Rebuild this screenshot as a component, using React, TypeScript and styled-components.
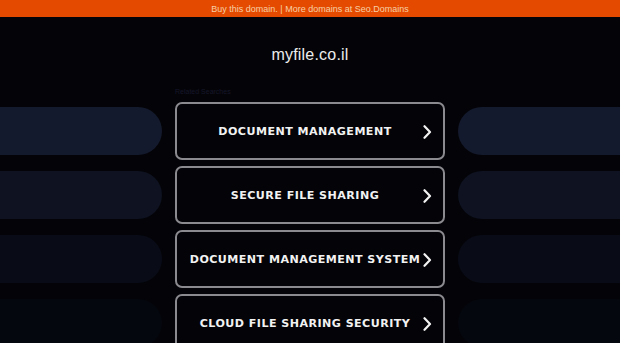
import React from "react";
import styled, { createGlobalStyle } from "styled-components";

const GlobalStyle = createGlobalStyle`
  html, body {
    margin: 0;
    padding: 0;
    background: #040408;
    overflow: hidden;
  }
`;

const Page = styled.div`
  width: 100%;
  min-height: 100vh;
  background: #040408;
  font-family: "Liberation Sans", Arial, sans-serif;
`;

const TopBar = styled.div`
  height: 17px;
  background: #e54b00;
  color: #f6cfa6;
  font-size: 9px;
  display: flex;
  align-items: center;
  justify-content: center;
`;

const Title = styled.h1`
  margin: 0;
  padding-top: 29px;
  height: 20px;
  text-align: center;
  font-size: 16px;
  font-weight: 400;
  color: #ececec;
  letter-spacing: 0.2px;
`;

const Related = styled.div`
  width: 270px;
  margin: 22px auto 0;
  font-size: 7px;
  color: #16162a;
  height: 14px;
`;

const List = styled.div`
  display: flex;
  flex-direction: column;
  gap: 6px;
`;

const Row = styled.div`
  display: flex;
  align-items: center;
  gap: 13px;
`;

const Pill = styled.div<{ $shade: string; $side: "left" | "right" }>`
  flex: 1;
  height: 48px;
  background: ${(p) => p.$shade};
  border-radius: ${(p) => (p.$side === "left" ? "0 24px 24px 0" : "24px 0 0 24px")};
`;

const LinkButton = styled.a`
  box-sizing: border-box;
  width: 270px;
  height: 58px;
  flex: none;
  border: 2px solid #8a8a8f;
  border-radius: 7px;
  padding: 1px 10px 0 12px;
  display: flex;
  align-items: center;
  color: #f2f2f2;
  text-decoration: none;
  font-family: "DejaVu Sans", sans-serif;
  font-weight: 700;
  font-size: 11.1px;
  letter-spacing: 0.45px;
`;

const Label = styled.span`
  flex: 1;
  text-align: center;
  white-space: nowrap;
`;

const Chevron = () => (
  <svg width="12" height="14" viewBox="0 0 12 14" fill="none">
    <path d="M3.5 1.2 L9 7 L3.5 12.8" stroke="#f2f2f2" strokeWidth="2.2" strokeLinecap="round" strokeLinejoin="round" />
  </svg>
);

const items = [
  { label: "DOCUMENT MANAGEMENT", shade: "#141a2d" },
  { label: "SECURE FILE SHARING", shade: "#0e1221" },
  { label: "DOCUMENT MANAGEMENT SYSTEM", shade: "#090c17" },
  { label: "CLOUD FILE SHARING SECURITY", shade: "#05070f" },
];

export default function App() {
  return (
    <Page>
      <GlobalStyle />
      <TopBar>Buy this domain. | More domains at Seo.Domains</TopBar>
      <Title>myfile.co.il</Title>
      <Related>Related Searches</Related>
      <List>
        {items.map((it) => (
          <Row key={it.label}>
            <Pill $shade={it.shade} $side="left" />
            <LinkButton href="#">
              <Label>{it.label}</Label>
              <Chevron />
            </LinkButton>
            <Pill $shade={it.shade} $side="right" />
          </Row>
        ))}
      </List>
    </Page>
  );
}
